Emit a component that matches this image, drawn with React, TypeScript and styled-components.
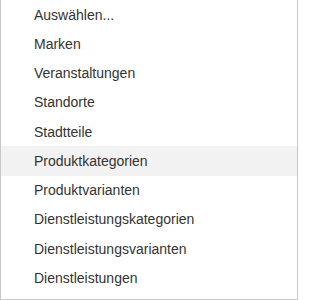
import React from "react";
import styled, { createGlobalStyle } from "styled-components";

const Global = createGlobalStyle`
  html, body { margin: 0; padding: 0; background: #fff; }
  body { font-family: Arial, "Liberation Sans", sans-serif; }
`;

const Menu = styled.ul`
  list-style: none;
  margin: 0;
  padding: 0;
  box-sizing: border-box;
  width: 298px;
  height: 300px;
  background: #fff;
  border: 1px solid #c8c8c8;
  border-top: none;
  overflow: hidden;
`;

const Item = styled.li<{ $active?: boolean }>`
  padding: 6.5px 10px 5.5px 33px;
  font-size: 14px;
  line-height: 17.25px;
  color: #333;
  background: ${(p) => (p.$active ? "#f2f2f2" : "transparent")};
  white-space: nowrap;
  cursor: pointer;
`;

const items = [
  "Auswählen...",
  "Marken",
  "Veranstaltungen",
  "Standorte",
  "Stadtteile",
  "Produktkategorien",
  "Produktvarianten",
  "Dienstleistungskategorien",
  "Dienstleistungsvarianten",
  "Dienstleistungen",
];

export default function App() {
  return (
    <>
      <Global />
      <Menu>
        {items.map((t, i) => (
          <Item key={t} $active={i === 5}>
            {t}
          </Item>
        ))}
      </Menu>
    </>
  );
}
